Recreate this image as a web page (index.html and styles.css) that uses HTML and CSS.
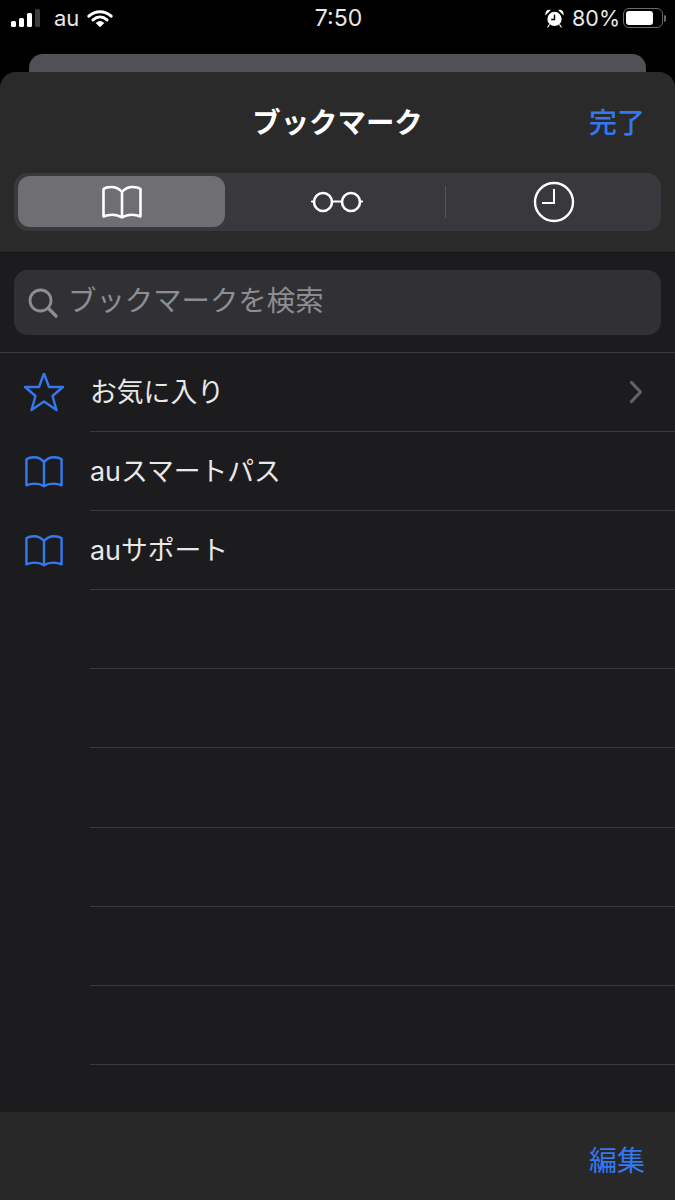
FILE: index.html
```html
<!DOCTYPE html>
<html lang="ja">

<head>
    <meta charset="UTF-8">
    <meta name="viewport" content="width=device-width, initial-scale=1.0">
    <title>ブックマーク</title>
    <link rel="stylesheet" href="styles.css">
</head>

<body>
    <svg class="sprites" width="0" height="0">
        <symbol id="book" viewBox="0 0 40 34">
            <path d="M20 7C17 3.500 14 2 9.500 2 6.500 2 3.500 2.500 1.500 4V31.500C6 29.500 14 28.500 20 32.500 26 28.500 34 29.500 38.500 31.500V4C36.500 2.500 33.500 2 30.500 2 26 2 23 3.500 20 7ZM20 7V32" fill="none" stroke="currentColor" stroke-width="2.600" stroke-linejoin="round" stroke-linecap="round" />
        </symbol>
    </svg>

    <div class="status-bar">
        <div class="status-left">
            <div class="signal">
                <span class="bar bar1"></span>
                <span class="bar bar2"></span>
                <span class="bar bar3"></span>
                <span class="bar bar4"></span>
            </div>
            <span class="carrier">au</span>
            <svg class="wifi" viewBox="0 0 28 20" width="26" height="19">
                <path d="M2 7.500C9 1 19 1 26 7.500M6.500 11.500C11 7.500 17 7.500 21.500 11.500" fill="none" stroke="#fff" stroke-width="3.200" stroke-linecap="round" />
                <path d="M10 14.800C12.500 12.800 15.500 12.800 18 14.800L14 19Z" fill="#fff" stroke="#fff" stroke-linejoin="round" />
            </svg>
        </div>
        <div class="status-time">7:50</div>
        <div class="status-right">
            <svg class="alarm" viewBox="0 0 20 20" width="19" height="19">
                <circle cx="10" cy="10.500" r="7.500" fill="#fff" />
                <path d="M10 6V11H6.500" fill="none" stroke="#000" stroke-width="1.500" />
                <path d="M1 5.500C1 2.500 3 1 5 1.500ZM19 5.500C19 2.500 17 1 15 1.500ZM4.500 16.500L3 19M15.500 16.500L17 19" fill="#fff" stroke="#fff" stroke-width="1.200" stroke-linecap="round" />
            </svg>
            <span class="percent">80%</span>
            <div class="battery">
                <div class="battery-level"></div>
            </div>
            <div class="battery-cap"></div>
        </div>
    </div>

    <div class="back-sheet"></div>

    <div class="sheet">
        <div class="sheet-head">
            <div class="nav">
                <h1 class="nav-title">ブックマーク</h1>
                <span class="nav-done">完了</span>
            </div>
            <div class="segments">
                <div class="segment segment-on">
                    <svg class="seg-book" width="40" height="34"><use href="#book" /></svg>
                </div>
                <div class="segment segment-mid">
                    <svg viewBox="0 0 54 24" width="54" height="24">
                        <circle cx="13" cy="12" r="9" fill="none" stroke="#fff" stroke-width="2.600" />
                        <circle cx="41" cy="12" r="9" fill="none" stroke="#fff" stroke-width="2.600" />
                        <path d="M22 11.500H32M2 11.500H4M50 11.500H52" fill="none" stroke="#fff" stroke-width="2.200" stroke-linecap="round" />
                    </svg>
                </div>
                <div class="seg-divider"></div>
                <div class="segment">
                    <svg viewBox="0 0 42 42" width="42" height="42">
                        <circle cx="21" cy="21" r="19" fill="none" stroke="#fff" stroke-width="2.400" />
                        <path d="M21 8V22H9" fill="none" stroke="#fff" stroke-width="2" />
                    </svg>
                </div>
            </div>
        </div>

        <div class="sheet-body">
            <div class="search-wrap">
                <div class="search">
                    <svg viewBox="0 0 30 30" width="30" height="30">
                        <circle cx="12.500" cy="12.500" r="10.500" fill="none" stroke="#8e8e92" stroke-width="2.800" />
                        <path d="M20.500 20.500L28 28" fill="none" stroke="#8e8e92" stroke-width="3.200" stroke-linecap="round" />
                    </svg>
                    <span class="search-text">ブックマークを検索</span>
                </div>
            </div>

            <ul class="list">
                <li class="row">
                    <div class="row-icon">
                        <svg viewBox="0 0 42 40" width="42" height="40">
                            <path d="M21 0.500L26 14H40L29.500 23 33.500 37 21 28.500 8.500 37 12.500 23 2 14H16Z" fill="none" stroke="#3478f0" stroke-width="2.400" stroke-linejoin="round" />
                        </svg>
                    </div>
                    <div class="row-main">
                        <span class="row-label">お気に入り</span>
                        <svg class="chevron" viewBox="0 0 14 24" width="14" height="24">
                            <path d="M2.500 2.500L11.500 12 2.500 21.500" fill="none" stroke="#636366" stroke-width="3.200" stroke-linecap="round" stroke-linejoin="round" />
                        </svg>
                    </div>
                </li>
                <li class="row">
                    <div class="row-icon"><svg class="book-blue" width="38" height="33"><use href="#book" /></svg></div>
                    <div class="row-main"><span class="row-label">auスマートパス</span></div>
                </li>
                <li class="row">
                    <div class="row-icon"><svg class="book-blue" width="38" height="33"><use href="#book" /></svg></div>
                    <div class="row-main"><span class="row-label">auサポート</span></div>
                </li>
                <li class="row"><div class="row-icon"></div><div class="row-main"></div></li>
                <li class="row"><div class="row-icon"></div><div class="row-main"></div></li>
                <li class="row"><div class="row-icon"></div><div class="row-main"></div></li>
                <li class="row"><div class="row-icon"></div><div class="row-main"></div></li>
                <li class="row"><div class="row-icon"></div><div class="row-main"></div></li>
                <li class="row"><div class="row-icon"></div><div class="row-main"></div></li>
            </ul>
        </div>

        <div class="toolbar">
            <span class="edit">編集</span>
        </div>
    </div>
</body>

</html>
```

FILE: styles.css
```css
* {
    box-sizing: border-box;
}

body {
    font-family: Inter, "Noto Sans CJK JP", sans-serif;
    margin: 0;
    background-color: #000;
    color: #fff;
    width: 675px;
    height: 1200px;
    overflow: hidden;
}

.sprites {
    display: block;
    height: 0;
}

.status-bar {
    height: 54px;
    padding: 0 9px 18px 11px;
    display: grid;
    grid-template-columns: 1fr auto 1fr;
    align-items: center;
    font-size: 22px;
}

.status-left {
    display: flex;
    align-items: center;
}

.signal {
    display: flex;
    align-items: flex-end;
    gap: 3px;
    height: 18px;
}

.bar {
    width: 5px;
    background-color: #fff;
    border-radius: 1.500px;
}

.bar1 {
    height: 6px;
}

.bar2 {
    height: 9px;
}

.bar3 {
    height: 14px;
}

.bar4 {
    height: 18px;
    background-color: #3c3c3e;
}

.carrier {
    margin-left: 14px;
    color: #e8e8e8;
}

.wifi {
    margin-left: 8px;
}

.status-time {
    font-size: 23px;
    color: #e8e8e8;
}

.status-right {
    display: flex;
    align-items: center;
    justify-content: flex-end;
}

.percent {
    margin-left: 8px;
    font-size: 21.500px;
    color: #e8e8e8;
}

.battery {
    width: 40px;
    height: 20px;
    margin-left: 3px;
    padding: 2px;
    border: 1px solid #6a6a6a;
    border-radius: 6px;
}

.battery-level {
    width: 27px;
    height: 14px;
    background-color: #fff;
    border-radius: 3px;
}

.battery-cap {
    width: 2px;
    height: 7px;
    margin-left: 1px;
    background-color: #6a6a6a;
    border-radius: 0 2px 2px 0;
}

.back-sheet {
    height: 30px;
    margin: 0 29px -12px;
    background-color: #505154;
    border-radius: 14px 14px 0 0;
}

.sheet {
    position: relative;
    height: 1128px;
    display: flex;
    flex-direction: column;
    background-color: #1c1c1e;
    border-radius: 16px 16px 0 0;
    overflow: hidden;
}

.sheet-head {
    height: 181px;
    padding: 0 14px;
    background-color: #2a2a2b;
    border-bottom: 1px solid #151516;
}

.nav {
    height: 101px;
    display: flex;
    align-items: center;
    justify-content: center;
    padding-bottom: 4px;
    position: relative;
}

.nav-title {
    margin: 0;
    font-size: 28.400px;
    font-weight: 700;
}

.nav-done {
    position: absolute;
    right: 16px;
    font-size: 28px;
    font-weight: 500;
    color: #3478f0;
}

.segments {
    height: 58px;
    padding: 3px 0 4px 4px;
    display: flex;
    align-items: center;
    background-color: #39393d;
    border-radius: 14px;
}

.segment {
    flex: 1;
    height: 51px;
    display: flex;
    align-items: center;
    justify-content: center;
    border-radius: 12px;
}

.segment-on {
    flex: none;
    width: 207px;
    background-color: #6f6f73;
}

.segment-mid {
    flex: none;
    width: 220px;
    padding-left: 4px;
}

.seg-book {
    color: #fff;
}

.seg-divider {
    width: 1px;
    height: 32px;
    background-color: #545458;
}

.sheet-body {
    flex: 1;
}

.search-wrap {
    padding: 17px 14px;
}

.search {
    height: 65px;
    padding: 0 0 2px 14px;
    display: flex;
    align-items: center;
    background-color: #313135;
    border-radius: 14px;
}

.search svg {
    margin-top: 2px;
}

.search-text {
    margin-left: 10px;
    padding-bottom: 6px;
    font-size: 28.400px;
    color: #8e8e92;
}

.list {
    margin: 0;
    padding: 0;
    list-style: none;
    border-top: 1px solid #3a3a3c;
}

.row {
    height: 79.100px;
    display: flex;
}

.row-icon {
    width: 90px;
    flex: none;
    padding-right: 3px;
    display: flex;
    align-items: center;
    justify-content: center;
}

.book-blue {
    color: #3478f0;
}

.row-main {
    flex: 1;
    padding: 0 32px 0 0;
    display: flex;
    align-items: center;
    justify-content: space-between;
    border-bottom: 1px solid #3a3a3c;
}

.row-label {
    padding-bottom: 4px;
    font-size: 26.800px;
    color: #e8e8e8;
}

.toolbar {
    height: 88px;
    padding: 6px 30px 0 0;
    display: flex;
    align-items: center;
    justify-content: flex-end;
    background-color: #282828;
}

.edit {
    font-size: 28px;
    color: #3478f0;
}
```
